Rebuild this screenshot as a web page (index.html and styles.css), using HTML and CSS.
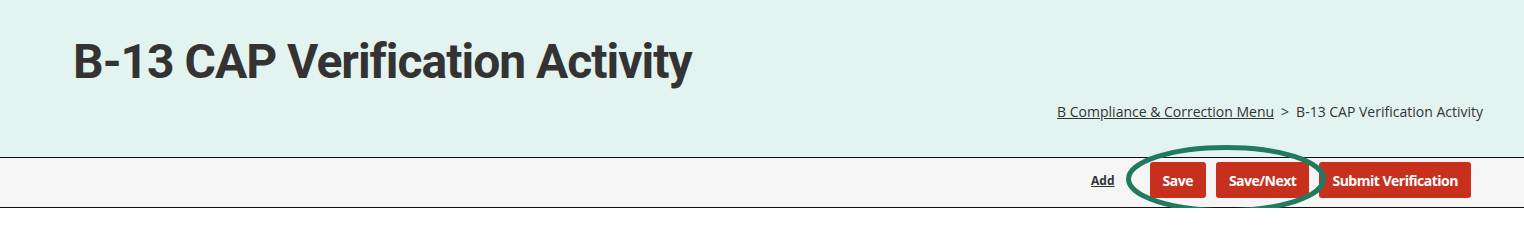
FILE: index.html
```html
<!DOCTYPE html>
<html>
<head>
<meta charset="utf-8">
<link rel="stylesheet" href="styles.css">
</head>
<body>
<header class="page-header">
  <h1 class="title">B-13 CAP Verification Activity</h1>
  <nav class="breadcrumb">
    <a href="#" class="crumb-link">B Compliance &amp; Correction Menu</a>
    <span class="crumb-sep">&gt;</span>
    <span class="crumb-current">B-13 CAP Verification Activity</span>
  </nav>
</header>
<div class="toolbar">
  <a href="#" class="add-link">Add</a>
  <div class="buttons">
    <button class="btn">Save</button>
    <button class="btn">Save/Next</button>
    <button class="btn">Submit Verification</button>
    <svg class="highlight" width="200" height="68" viewBox="0 0 200 68">
      <ellipse cx="100" cy="34" rx="97.5" ry="31.5" fill="none" stroke="#1f7a5f" stroke-width="5"/>
    </svg>
  </div>
</div>
</body>
</html>
```

FILE: styles.css
```css
* { box-sizing: border-box; }
html, body { margin: 0; padding: 0; background: #ffffff; }
body { font-family: "Open Sans", "Liberation Sans", sans-serif; color: #333333; }

.page-header {
  background: #e3f3ef;
  height: 157px;
  padding: 38px 41px 0 73px;
  display: flex;
  flex-direction: column;
}
.title {
  margin: 0;
  font-family: Roboto, "Liberation Sans", sans-serif;
  font-weight: 700;
  font-size: 48px;
  line-height: 48px;
  color: #333333;
  letter-spacing: -1px;
}
.breadcrumb {
  margin-top: 16px;
  align-self: flex-end;
  font-size: 14px;
  line-height: 20px;
  color: #333333;
  display: flex;
  gap: 7px;
}
.crumb-link { color: #333333; text-decoration: underline; }

.toolbar {
  background: #f5f5f5;
  border-top: 1px solid #111111;
  border-bottom: 1px solid #111111;
  height: 51px;
  display: flex;
  justify-content: flex-end;
  align-items: center;
  padding: 0 53px 5px 0;
}
.add-link {
  font-size: 12px;
  font-weight: 700;
  color: #333333;
  text-decoration: underline;
  margin-right: 35px;
}
.buttons {
  position: relative;
  display: flex;
  gap: 10px;
}
.btn {
  background: #c8301e;
  color: #ffffff;
  border: none;
  border-radius: 3px;
  height: 36px;
  padding: 0 13px;
  font-family: "Open Sans", "Liberation Sans", sans-serif;
  font-weight: 700;
  font-size: 14px;
  letter-spacing: -0.5px;
}
.highlight {
  position: absolute;
  left: -24px;
  top: -17px;
  pointer-events: none;
}
```
